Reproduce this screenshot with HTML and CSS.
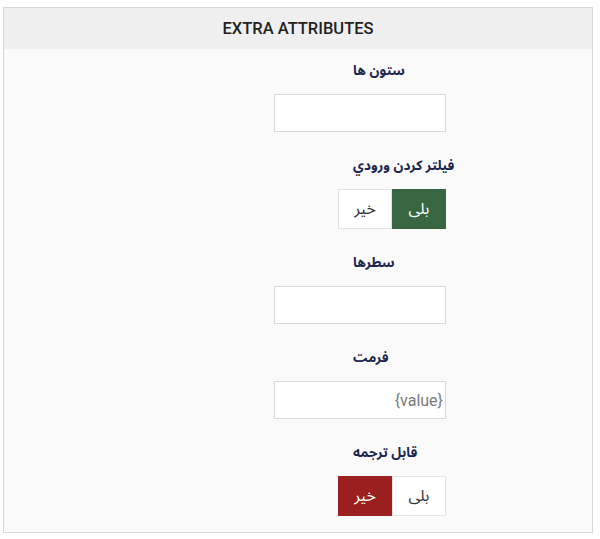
FILE: index.html
```html
<!DOCTYPE html>
<html lang="fa">
<head>
  <meta charset="UTF-8">
  <meta name="viewport" content="width=device-width, initial-scale=1.0">
  <title>Extra Attributes</title>
  <link rel="stylesheet" href="styles.css">
</head>
<body>
  <div class="panel">
    <div class="panel-heading">EXTRA ATTRIBUTES</div>
    <div class="panel-body">
      <div class="field">
        <label class="field-label">ستون ها</label>
        <input type="text" class="field-input">
      </div>
      <div class="field">
        <label class="field-label">فیلتر کردن ورودي</label>
        <div class="switch">
          <button class="switch-btn yes active">بلی</button>
          <button class="switch-btn">خیر</button>
        </div>
      </div>
      <div class="field">
        <label class="field-label">سطرها</label>
        <input type="text" class="field-input">
      </div>
      <div class="field">
        <label class="field-label">فرمت</label>
        <input type="text" class="field-input" placeholder="{value}">
      </div>
      <div class="field">
        <label class="field-label">قابل ترجمه</label>
        <div class="switch">
          <button class="switch-btn">بلی</button>
          <button class="switch-btn no active">خیر</button>
        </div>
      </div>
    </div>
  </div>
</body>
</html>
```

FILE: styles.css
```css
body {
  margin: 0;
  background: #fff;
  font-family: "Noto Sans Arabic", "Noto Sans", "DejaVu Sans", sans-serif;
}

.panel {
  margin: 7px 7px 0 3px;
  border: 1px solid #d6d6d6;
  background: #fafafa;
}

.panel-heading {
  height: 41px;
  line-height: 41px;
  background: #efefef;
  text-align: center;
  font-family: Roboto, "Liberation Sans", sans-serif;
  font-weight: 500;
  font-size: 16.5px;
  color: #222;
}

.panel-body {
  padding: 12px 0 16px 270px;
}

.field {
  width: 172px;
  margin-bottom: 24px;
  direction: rtl;
}

.field:last-child {
  margin-bottom: 0;
}

.field-label {
  display: block;
  margin: 0 -30px 13px 79px;
  height: 20px;
  line-height: 20px;
  text-align: left;
  white-space: nowrap;
  font-size: 13.5px;
  font-weight: bold;
  color: #1c2650;
}

.field-input {
  display: block;
  box-sizing: border-box;
  width: 172px;
  height: 38px;
  margin: 0;
  padding: 0 2px;
  border: 1px solid #d9d9d9;
  background: #fff;
  font-family: Roboto, sans-serif;
  font-size: 16px;
  color: #333;
}

.field-input::placeholder {
  color: #7a7a7a;
}

.switch {
  display: flex;
  width: 108px;
  height: 40px;
  margin-left: 63px;
}

.switch-btn {
  flex: 1;
  margin: 0;
  border: 1px solid #e2e2e2;
  background: #fff;
  font-family: inherit;
  font-size: 16px;
  color: #333;
  cursor: pointer;
}

.switch-btn.yes.active {
  background: #376641;
  border-color: #376641;
  color: #fff;
}

.switch-btn.no.active {
  background: #9c1f1f;
  border-color: #9c1f1f;
  color: #fff;
}
```
